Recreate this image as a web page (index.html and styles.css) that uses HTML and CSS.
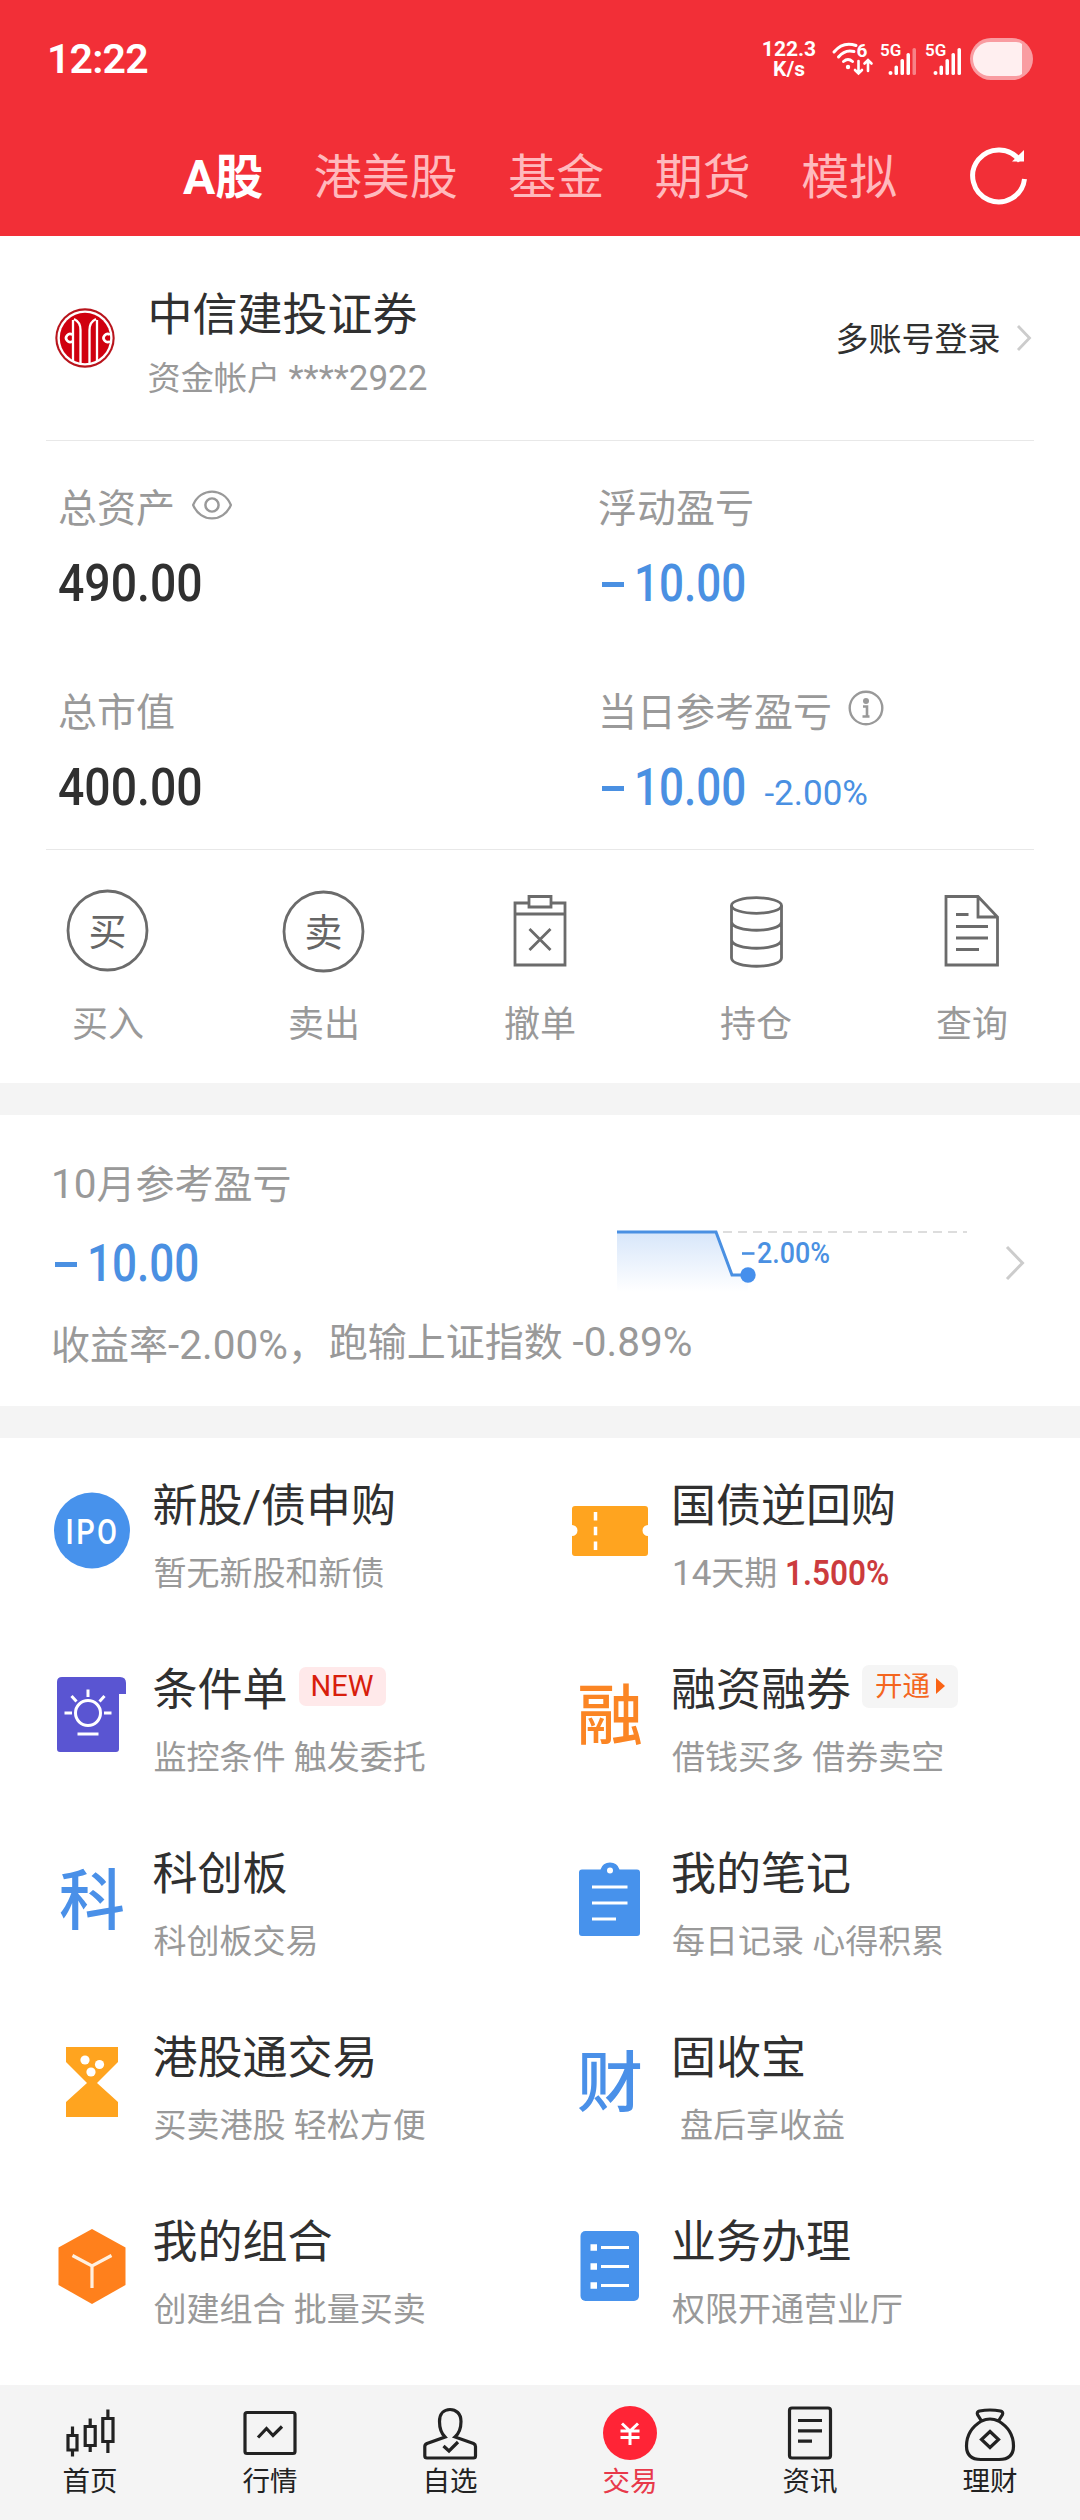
FILE: index.html
```html
<!DOCTYPE html>
<html lang="zh-CN">
<head>
<meta charset="utf-8">
<title>交易</title>
<link rel="stylesheet" href="styles.css">
</head>
<body>
<header class="top">
  <div class="status">
    <span class="clock">12:22</span>
    <div class="speed"><span>122.3</span><span>K/s</span></div>
    <svg class="signals" width="214" height="50" viewBox="0 0 214 50">
      <g fill="none" stroke="#fff" stroke-width="3" stroke-linecap="round">
        <path d="M2 15 Q11 4 24 8.500"/><path d="M6.500 20 Q13 12 22 14.500"/><path d="M11.500 24.500 Q16 20.500 20.500 24.500"/>
        <path d="M26.500 24V36M23 33l3.500 3.500 3.500-3.500M36 34V24M32.500 26.500l3.500-3.500 3.500 3.500" stroke-width="2.600"/>
      </g>
      <circle cx="16" cy="30" r="2.200" fill="#fff"/>
      <g fill="#fff">
        <text class="st-six" x="24.500" y="20">6</text>
        <text class="st-net" x="48" y="19">5G</text>
        <text class="st-net" x="93" y="19">5G</text>
        <circle cx="58.500" cy="36" r="2"/>
        <rect x="62.500" y="28.500" width="3.500" height="9.500" rx="1.600"/>
        <rect x="68.500" y="22" width="3.500" height="16" rx="1.600"/>
        <rect x="74.500" y="16" width="3.500" height="22" rx="1.600"/>
        <rect x="80.500" y="11" width="3.500" height="27" rx="1.600" opacity=".4"/>
        <circle cx="103.500" cy="36" r="2"/>
        <rect x="107.500" y="28.500" width="3.500" height="9.500" rx="1.600"/>
        <rect x="113.500" y="22" width="3.500" height="16" rx="1.600"/>
        <rect x="119.500" y="16" width="3.500" height="22" rx="1.600"/>
        <rect x="125.500" y="11" width="3.500" height="27" rx="1.600"/>
      </g>
      <rect x="138" y="1" width="63" height="42" rx="21" fill="#f99ca1"/>
      <path d="M158 5H184Q188 5 190 7V37Q188 39 184 39H158A17 17 0 0 1 158 5Z" fill="#ffeff0"/>
    </svg>
  </div>
  <nav class="tabs">
    <span class="tab active">A股</span><span class="tab">港美股</span><span class="tab">基金</span><span class="tab">期货</span><span class="tab">模拟</span>
    <svg class="refresh" width="64" height="64" viewBox="0 0 64 64"><path d="M53 20A26 26 0 1 0 57.500 38" fill="none" stroke="#fff" stroke-width="5"/><path d="M57 9V20.500H45Z" fill="#fff"/></svg>
  </nav>
</header>

<section class="account">
  <svg class="logo" width="60" height="60" viewBox="0 0 60 60">
    <circle cx="30" cy="30" r="29.700" fill="#b8141c"/><circle cx="30" cy="30" r="27.600" fill="#fff"/><circle cx="30" cy="30" r="25.200" fill="#d0000f"/>
    <g fill="none" stroke="#fff" stroke-width="2.300">
      <path d="M18 54V12M19 11Q25.500 14 25.500 22V56M42 54V12M41 11Q34.500 14 34.500 22V56"/>
    </g>
    <path d="M17.500 26.800A4 4 0 1 0 17.500 33.200M55 26.800A4 4 0 1 0 55 33.200" fill="none" stroke="#fff" stroke-width="2.600"/>
  </svg>
  <div class="who">
    <div class="broker">中信建投证券</div>
    <div class="acct">资金帐户 <span class="num35">****2922</span></div>
  </div>
  <span class="multi">多账号登录</span>
  <svg class="chev" width="16" height="30" viewBox="0 0 16 30"><path d="M2 3L13.500 15 2 27" fill="none" stroke="#ccc" stroke-width="2.800"/></svg>
</section>

<section class="assets">
  <div class="asset">
    <div class="label">总资产<svg class="eye" width="42" height="34" viewBox="0 0 44 36"><path d="M2 18C10-1 34-1 42 18C34 37 10 37 2 18Z" fill="none" stroke="#999" stroke-width="2.400"/><circle cx="22" cy="18" r="7" fill="none" stroke="#999" stroke-width="2.600"/></svg></div>
    <div class="value"><b class="din">490.00</b></div>
  </div>
  <div class="asset">
    <div class="label">浮动盈亏</div>
    <div class="value blue"><i class="minus"></i><b class="din loss">10.00</b></div>
  </div>
  <div class="asset">
    <div class="label">总市值</div>
    <div class="value"><b class="din">400.00</b></div>
  </div>
  <div class="asset">
    <div class="label">当日参考盈亏<svg class="info" width="38" height="38" viewBox="0 0 38 38"><circle cx="19" cy="19" r="16.300" fill="none" stroke="#999" stroke-width="2.400"/><circle cx="19" cy="12" r="3" fill="#999"/><path d="M16 17.500H20V27M15.500 27.500H22.500" fill="none" stroke="#999" stroke-width="2.600"/></svg></div>
    <div class="value blue"><i class="minus"></i><b class="din loss">10.00</b><span class="pct">-2.00%</span></div>
  </div>
</section>

<section class="actions">
  <div class="action"><svg width="90" height="90" viewBox="0 0 90 90"><circle cx="44.500" cy="44.500" r="39.500"/><text x="44.500" y="59">买</text></svg><span>买入</span></div>
  <div class="action"><svg width="90" height="90" viewBox="0 0 90 90"><circle cx="44.500" cy="45.500" r="39.500"/><text x="44.500" y="60">卖</text></svg><span>卖出</span></div>
  <div class="action"><svg width="90" height="90" viewBox="0 0 90 90"><path d="M33.500 17H20V79H70V17H56.500M20 28H70M34 10.500H56V21H34ZM34.500 43l21 21M55.500 43l-21 21"/></svg><span>撤单</span></div>
  <div class="action"><svg width="90" height="90" viewBox="0 0 90 90"><ellipse cx="45.500" cy="19.500" rx="25" ry="7.800"/><path d="M20.500 19.500V72C20.500 83 70.500 83 70.500 72V19.500M20.500 36C22 47 69 47 70.500 36M20.500 54C22 65 69 65 70.500 54"/></svg><span>持仓</span></div>
  <div class="action"><svg width="90" height="90" viewBox="0 0 90 90"><path d="M19 10.500H51L70.500 31V79H19ZM51 10.500V31H70.500M29 28.500H41.500M29 40.500H61M29 52H61M29 63.500H52"/></svg><span>查询</span></div>
</section>

<section class="month">
  <div class="month-text">
    <div class="month-title"><span class="num41">10</span>月参考盈亏</div>
    <div class="value blue"><i class="minus"></i><b class="din loss">10.00</b></div>
    <div class="month-note"><span>收益率<span class="num41">-2.00%</span>，</span><span class="beat">跑输上证指数 <span class="num41">-0.89%</span></span></div>
  </div>
  <svg class="chart" width="352" height="80" viewBox="0 0 352 80">
    <defs><linearGradient id="fade" x1="0" y1="0" x2="0" y2="1"><stop offset="0" stop-color="#d7e6fa"/><stop offset="1" stop-color="#fff"/></linearGradient></defs>
    <path d="M0 12H99L115 55H131V72H0Z" fill="url(#fade)"/>
    <path d="M106 12H350" stroke="#ddd" stroke-width="2" stroke-dasharray="9 6"/>
    <path d="M0 12H99L115 55H131" fill="none" stroke="#4a90e2" stroke-width="3"/>
    <circle cx="131" cy="55" r="7.700" fill="#468fec"/>
    <path d="M125 33.500H137.500" stroke="#4a90e2" stroke-width="2.600"/>
    <text x="140" y="43" textLength="73" lengthAdjust="spacingAndGlyphs">2.00%</text>
  </svg>
  <svg class="chev2" width="22" height="38" viewBox="0 0 22 38"><path d="M3 3L18.500 19 3 35" fill="none" stroke="#ccc" stroke-width="3"/></svg>
</section>

<section class="menu">
  <div class="entry">
    <svg class="ico" width="80" height="80" viewBox="0 0 80 80"><circle cx="40" cy="40.500" r="38" fill="#4792ec"/><text class="ipo" x="13.500" y="53.500" textLength="54" lengthAdjust="spacingAndGlyphs">IPO</text></svg>
    <div class="entry-text"><div class="title">新股/债申购</div><div class="sub">暂无新股和新债</div></div>
  </div>
  <div class="entry">
    <svg class="ico" width="80" height="80" viewBox="0 0 80 80"><path d="M4 16H75Q78 16 78 19V35A5.500 5.500 0 0 0 78 46V63Q78 66 75 66H5Q2 66 2 63V46A5.500 5.500 0 0 0 2 35V19Q2 16 5 16Z" fill="#ffa41f"/><path d="M25.500 22V60" stroke="#fff" stroke-width="3.500" stroke-dasharray="8.500 6.200"/></svg>
    <div class="entry-text"><div class="title">国债逆回购</div><div class="sub"><span class="num35">14</span>天期 <b class="rate">1.500%</b></div></div>
  </div>
  <div class="entry">
    <svg class="ico" width="80" height="80" viewBox="0 0 80 80"><path d="M5 8Q5 3 10 3H68Q74 3 74 9V20H67V75Q67 78 64 78H8Q5 78 5 75Z" fill="#5a55d2"/><g fill="none" stroke="#fff" stroke-width="3"><circle cx="36" cy="39" r="12.500"/><path d="M36 15.500V23M12.500 39H20M52 39H59.500M19.500 22L24.500 27.500M52.500 22L47.500 27.500M25.500 60H46.500"/></g></svg>
    <div class="entry-text"><div class="title">条件单<span class="tag new">NEW</span></div><div class="sub">监控条件 触发委托</div></div>
  </div>
  <div class="entry">
    <svg class="ico" width="80" height="80" viewBox="0 0 80 80"><text class="glyph" x="40" y="65" fill="#fb8524">融</text></svg>
    <div class="entry-text"><div class="title">融资融券<span class="tag open">开通<i class="tri"></i></span></div><div class="sub">借钱买多 借券卖空</div></div>
  </div>
  <div class="entry">
    <svg class="ico" width="80" height="80" viewBox="0 0 80 80"><text class="glyph" x="40" y="65.500" fill="#4a90e8">科</text></svg>
    <div class="entry-text"><div class="title">科创板</div><div class="sub">科创板交易</div></div>
  </div>
  <div class="entry">
    <svg class="ico" width="80" height="80" viewBox="0 0 80 80"><path d="M12 11.500H30.500A10 10 0 0 1 49.500 11.500H67Q70 11.500 70 14.500V75Q70 78 67 78H12Q9 78 9 75V14.500Q9 11.500 12 11.500Z" fill="#4792ec"/><circle cx="40" cy="12.500" r="3" fill="#fff"/><path d="M22 29H57.500M22 45H57.500M22 61H46" stroke="#fff" stroke-width="3"/></svg>
    <div class="entry-text"><div class="title">我的笔记</div><div class="sub">每日记录 心得积累</div></div>
  </div>
  <div class="entry">
    <svg class="ico" width="80" height="80" viewBox="0 0 80 80"><path d="M14 5H66V20L45 41L66 60V75H14V60L35 41L14 20Z" fill="#ffa41f"/><g fill="#fff"><circle cx="33" cy="18" r="4.600"/><circle cx="47.500" cy="22.500" r="4.600"/><circle cx="39" cy="30" r="4.600"/></g></svg>
    <div class="entry-text"><div class="title">港股通交易</div><div class="sub">买卖港股 轻松方便</div></div>
  </div>
  <div class="entry">
    <svg class="ico" width="80" height="80" viewBox="0 0 80 80"><text class="glyph" x="40" y="63.500" fill="#4a90e8">财</text></svg>
    <div class="entry-text"><div class="title">固收宝</div><div class="sub indent">盘后享收益</div></div>
  </div>
  <div class="entry">
    <svg class="ico" width="80" height="80" viewBox="0 0 80 80"><path d="M40 3L73.500 21.500V59L40 78L6.500 59V21.500Z" fill="#ff801c"/><path d="M20.500 29.500L40 40 59.500 29.500M40 40V62" fill="none" stroke="#fff0e0" stroke-width="3.200"/></svg>
    <div class="entry-text"><div class="title">我的组合</div><div class="sub">创建组合 批量买卖</div></div>
  </div>
  <div class="entry">
    <svg class="ico" width="80" height="80" viewBox="0 0 80 80"><rect x="10.500" y="5" width="58.500" height="70" rx="5" fill="#4792ec"/><path d="M20.500 21.500H27M20.500 40.500H27M20.500 59.500H27" stroke="#fff" stroke-width="6.500"/><path d="M31 21.500H59M31 40.500H59M31 59.500H59" stroke="#fff" stroke-width="3"/></svg>
    <div class="entry-text"><div class="title">业务办理</div><div class="sub">权限开通营业厅</div></div>
  </div>
</section>

<nav class="bottom">
  <div class="item"><svg width="60" height="60" viewBox="0 0 60 60"><path d="M8 32.500H17V47H8ZM12.500 23.500V32M12.500 47V53.500M25.200 23.500H35.200V42.500H25.200ZM30.200 15.500V23M30.200 43V49M42.800 15.500H53V38.500H42.800ZM47.900 6.500V15M47.900 39V50"/></svg><span>首页</span></div>
  <div class="item"><svg width="60" height="60" viewBox="0 0 60 60"><rect x="5" y="9.500" width="50" height="41" rx="2"/><path d="M18 34.500L26.500 25.500 33 32.500 42 23.500"/></svg><span>行情</span></div>
  <div class="item"><svg width="60" height="60" viewBox="0 0 60 60"><path d="M25 34C21 30 19.500 25 19.500 18.500C19.500 10.500 24 6.500 30 6.500C36 6.500 41 10.500 41 18.500C41 25 39.500 30 35 34L53.500 40.500Q55.500 41.500 55.500 43.500V53Q55.500 55 53.500 55H7Q4.800 55 4.800 53V43.500Q4.800 41.500 7 40.500Z"/><path d="M23.500 43L29 48 38 39"/></svg><span>自选</span></div>
  <div class="item on"><svg width="60" height="60" viewBox="0 0 60 60"><circle cx="30" cy="30" r="27" fill="#ff2436" stroke="none"/><path d="M22 20.500L30 28 38 20.500M20.500 28H39.500M20.500 34.500H39.500M30 28V42" stroke="#fff" stroke-width="3"/></svg><span>交易</span></div>
  <div class="item"><svg width="60" height="60" viewBox="0 0 60 60"><rect x="9.500" y="5" width="41" height="50" rx="2.500"/><path d="M18 17.500H42M18 27.800H42M18 38.200H32"/></svg><span>资讯</span></div>
  <div class="item"><svg width="60" height="60" viewBox="0 0 60 60"><path d="M21.500 18L17.500 11.500Q16.500 9 19.500 8Q30 6 40.500 8Q43.500 9 42.500 11.500L38.500 18"/><path d="M21.500 18Q30 14 38.500 18Q53.500 27 53.500 43Q53.500 56.500 39 56.500H21Q6.500 56.500 6.500 43Q6.500 27 21.500 18Z"/><path d="M30 28.500L38.500 36.500 30 44.500 21.500 36.500Z"/></svg><span>理财</span></div>
</nav>
</body>
</html>
```

FILE: styles.css
```css
* { box-sizing: border-box; }
body {
  margin: 0;
  width: 1080px;
  height: 2520px;
  background: #fff;
  color: #303030;
  font-family: Roboto, "Noto Sans CJK SC", sans-serif;
  font-weight: 400;
  display: flex;
  flex-direction: column;
  overflow: hidden;
}
svg { display: block; flex: none; overflow: visible; }
i { font-style: normal; }

.top { height: 236px; background: #f22f37; color: #fff; flex: none; }
.status { height: 120px; display: flex; align-items: flex-start; padding-left: 47px; }
.clock { width: 701px; margin-top: 39px; font-size: 41px; line-height: 41px; font-weight: 600; letter-spacing: -.8px; }
.speed {
  width: 100px; margin: 40px 0 0 -9px;
  display: flex; flex-direction: column; align-items: center;
  font-size: 21px; line-height: 19.500px; font-weight: 700;
}
.signals { margin: 37px 0 0 -7px; }
.st-six { font-size: 19px; font-weight: 700; }
.st-net { font-size: 17px; font-weight: 600; }
.tabs { height: 116px; display: flex; align-items: center; gap: 50.500px; padding: 0 0 1px 183px; }
.tab { font-size: 48px; line-height: 60px; color: #ffb9bd; white-space: nowrap; }
.tab.active { color: #fff; font-weight: 700; }
.refresh { margin: 0 0 9px 19px; }

.account { height: 204px; flex: none; display: flex; align-items: center; padding-left: 54.500px; }
.who { margin-left: 33px; width: 688px; height: 100%; padding-top: 50px; }
.broker { font-size: 45px; line-height: 60px; color: #303030; }
.acct { margin-top: 8px; font-size: 33.200px; line-height: 50px; color: #999; white-space: nowrap; }
.num35 { font-size: 35px; }
.num41 { font-size: 40.500px; }
.multi { font-size: 33px; line-height: 44px; white-space: nowrap; margin-top: 4px; }
.chev { margin-left: 15px; }

.assets {
  margin: 0 46px; height: 410px; flex: none;
  border-top: 1px solid #e8e8e8; border-bottom: 1px solid #e8e8e8;
  display: grid; grid-template-columns: 540px 1fr; grid-template-rows: 204px 204px;
  padding: 1px 0 0 12px;
}
.asset { padding-top: 42px; }
.label { display: flex; align-items: center; height: 50px; font-size: 39px; line-height: 50px; color: #999; }
.eye { margin: 0 0 9px 16px; }
.info { margin: 0 0 11px 15px; }
.value { height: 60px; margin-top: 20px; display: flex; align-items: baseline; font-size: 51.500px; line-height: 60px; color: #303030; }
.din { display: inline-block; font-weight: 500; font-size: 51.500px; transform: scaleX(.9); transform-origin: left; }
.din.loss { transform: translateX(1px) scaleX(.855); }
.blue { color: #4a90e2; }
.minus { width: 22px; height: 5px; background: currentColor; margin: 0 9px 27px 4px; align-self: flex-end; }
.pct { font-size: 35px; }

.actions { height: 233px; flex: none; display: grid; grid-template-columns: repeat(5, 216px); padding-top: 36px; }
.action { display: flex; flex-direction: column; align-items: center; font-size: 36px; line-height: 50px; color: #999; }
.action svg { fill: none; stroke: #6b6b6b; stroke-width: 2.800px; }
.action text { fill: #666; stroke: none; font-size: 38px; text-anchor: middle; }
.action span { margin-top: 24px; }

.month {
  height: 355px; flex: none; display: flex; padding-left: 51px;
  border-top: 32px solid #f4f4f4; border-bottom: 32px solid #f4f4f4; color: #999;
}
.month-text { width: 566px; padding-top: 44px; }
.month-title, .month-note { font-size: 39px; line-height: 50px; white-space: nowrap; }
.month .value { margin-top: 24px; }
.month-note { margin-top: 26px; display: flex; align-items: flex-start; }
.beat { margin: -3px 0 0 2px; }
.chart { margin-top: 105px; }
.chart text { font-size: 29px; font-weight: 500; fill: #4a90e2; }
.chev2 { margin: 129px 0 0 35px; }

.menu { flex: none; height: 947px; display: grid; grid-template-columns: 518.500px 1fr; grid-template-rows: repeat(5, 184px); padding-left: 51.500px; }
.entry { display: flex; align-items: center; }
.ico { font-family: "Noto Sans CJK SC", sans-serif; }
.ipo { font-family: Roboto, sans-serif; font-size: 35.500px; font-weight: 500; letter-spacing: 3px; fill: #fff; }
.glyph { font-size: 66px; font-weight: 500; text-anchor: middle; }
.entry-text { height: 184px; padding: 36px 0 0 21px; white-space: nowrap; }
.title { height: 66px; font-size: 45px; line-height: 66px; display: flex; align-items: center; }
.sub { margin-top: 11.500px; padding-left: 1px; font-size: 33px; line-height: 43px; color: #999; }
.sub.indent { padding-left: 9px; }
.rate { font-size: 35px; font-weight: 600; color: #cc3b3d; display: inline-block; transform: translateX(-1px) scaleX(.9); transform-origin: left; }
.tag { margin-left: 11px; border-radius: 7px; display: flex; align-items: center; justify-content: center; }
.new { width: 87px; height: 39px; margin-top: -10px; font-size: 29px; line-height: 39px; background: #ffe9ea; color: #d81e0c; }
.open { width: 96px; height: 43px; margin-top: -10px; font-size: 27.500px; line-height: 43px; background: #f5f5f5; color: #f4661f; }
.tri { border-left: 9px solid #fa6315; border-top: 8px solid transparent; border-bottom: 8px solid transparent; margin-left: 6px; }

.bottom { flex: none; height: 135px; background: #f4f4f4; display: grid; grid-template-columns: repeat(6, 180px); padding-top: 18px; }
.item { display: flex; flex-direction: column; align-items: center; font-size: 27.500px; line-height: 37px; color: #222; }
.item svg { fill: none; stroke: #222; stroke-width: 3.200px; }
.item.on { color: #e8394a; }
```
